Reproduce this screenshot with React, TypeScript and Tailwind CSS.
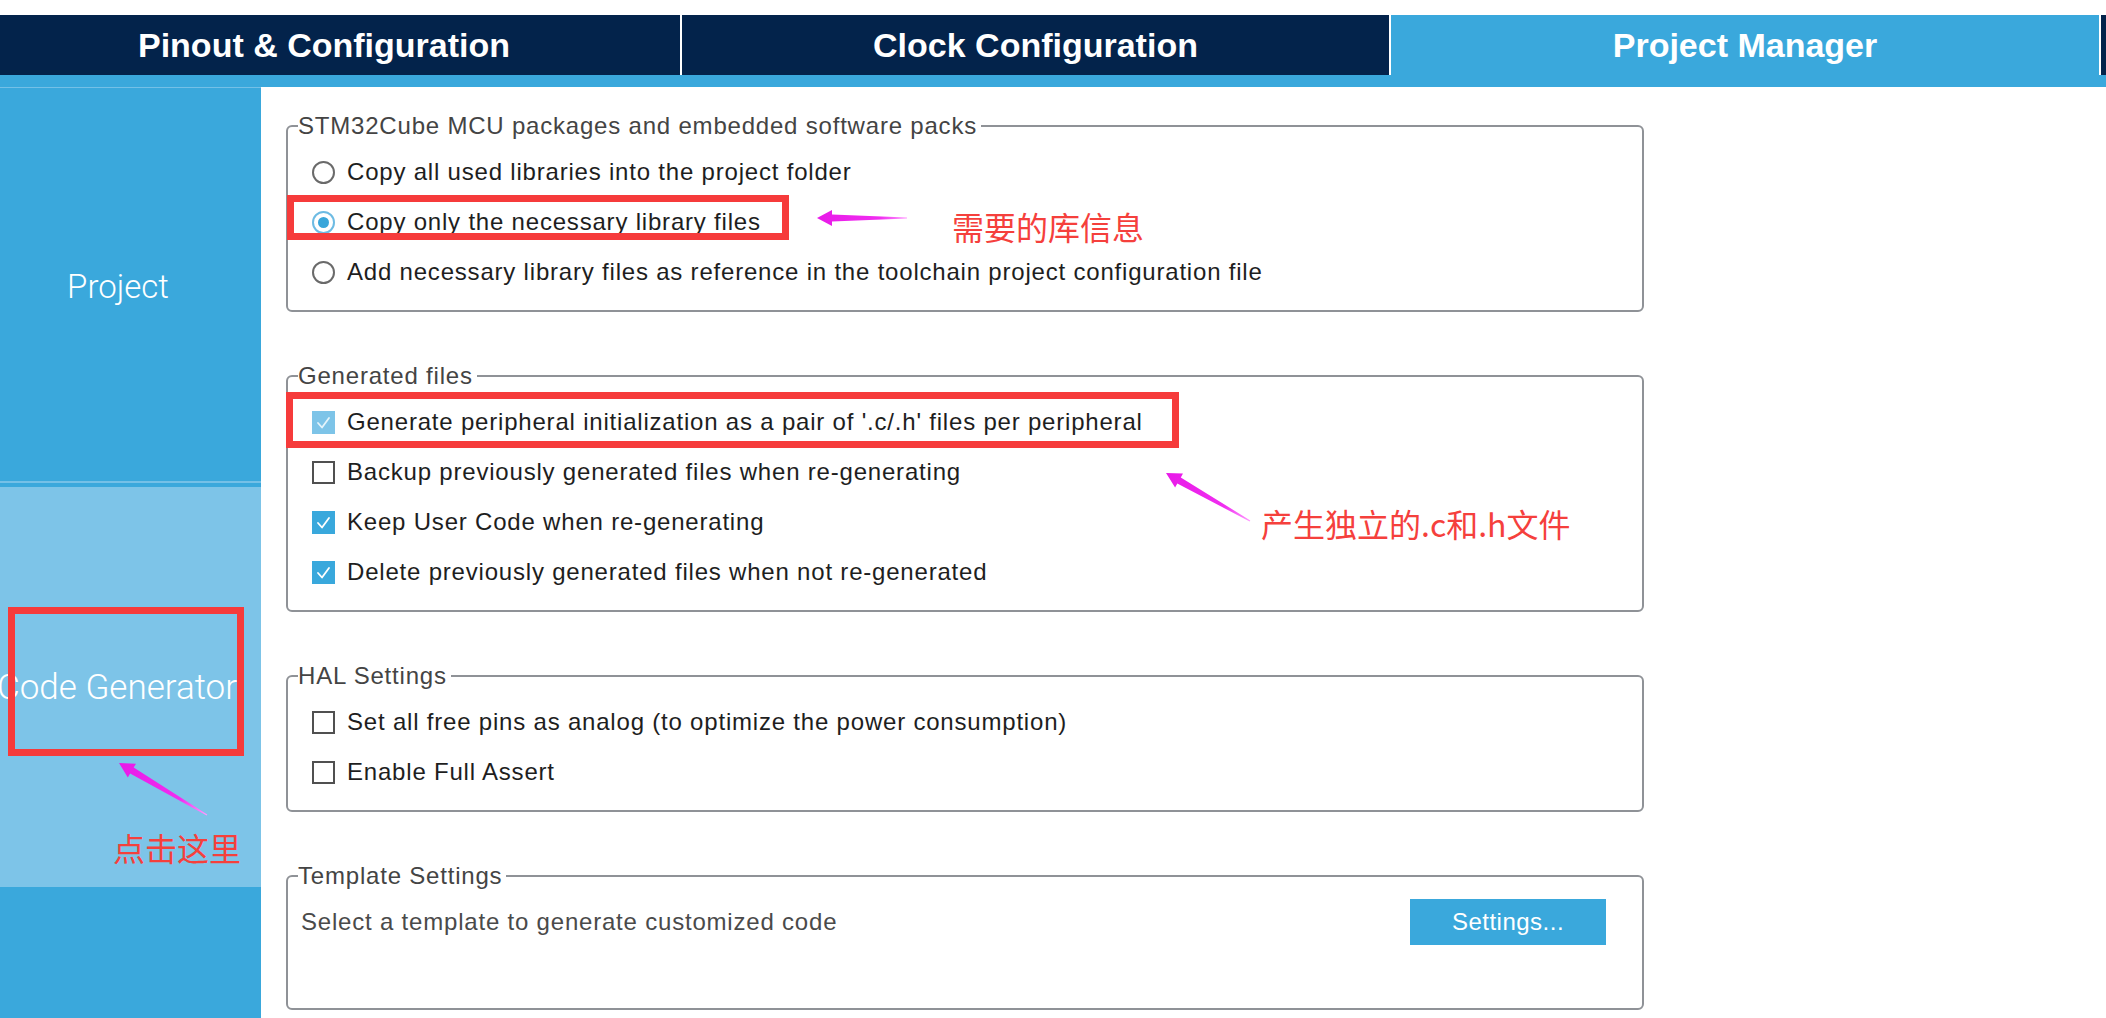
import React from "react";

type Pt = [number, number];

const UI_FONT = "font-['Liberation_Sans',Arial,sans-serif]";
const CJK_FONT = "font-['Noto_Sans_CJK_SC','Noto_Sans',sans-serif]";

function arrowPoints(tip: Pt, tail: Pt) {
  const dx = tail[0] - tip[0];
  const dy = tail[1] - tip[1];
  const len = Math.hypot(dx, dy);
  const ux = dx / len;
  const uy = dy / len;
  const nx = -uy;
  const ny = ux;
  const p = (a: number, b: number) =>
    `${(tip[0] + ux * a + nx * b).toFixed(1)},${(tip[1] + uy * a + ny * b).toFixed(1)}`;
  return [p(0, 0), p(15, 8), p(15, 3.5), p(len, 0.6), p(len, -0.6), p(15, -3.5), p(15, -8)].join(" ");
}

const arrows: { tip: Pt; tail: Pt }[] = [
  { tip: [817, 218], tail: [907, 218] },
  { tip: [1166, 473], tail: [1250, 521] },
  { tip: [119, 763], tail: [207, 815] },
];

function Radio({ checked }: { checked?: boolean }) {
  if (checked)
    return (
      <span className="flex h-[23px] w-[23px] shrink-0 items-center justify-center rounded-full border-2 border-[#6dbbe3] bg-white">
        <span className="h-[11px] w-[11px] rounded-full bg-[#39a6da]" />
      </span>
    );
  return <span className="h-[23px] w-[23px] shrink-0 rounded-full border-2 border-[#6a6a6a] bg-white" />;
}

function Check({ state }: { state: "on" | "off" | "dim" }) {
  if (state === "off")
    return <span className="h-[23px] w-[23px] shrink-0 border-2 border-[#505050] bg-white" />;
  return (
    <span
      className={`flex h-[23px] w-[23px] shrink-0 items-center justify-center ${
        state === "on" ? "bg-[#39a8dc]" : "bg-[#7dc4e8]"
      }`}
    >
      <svg width="23" height="23" viewBox="0 0 23 23">
        <polyline
          points="6,12 10,16.5 17,7"
          fill="none"
          stroke={state === "on" ? "#ffffff" : "#e4f4fb"}
          strokeWidth="1.8"
          strokeLinecap="round"
          strokeLinejoin="round"
        />
      </svg>
    </span>
  );
}

function Row({ control, label }: { control: React.ReactNode; label: string }) {
  return (
    <div className="flex h-[50px] items-center gap-[12px] pl-[14px]">
      {control}
      <span className="whitespace-nowrap text-[24px] tracking-[0.8px] text-[#1e1e1e]">{label}</span>
    </div>
  );
}

function Group({
  title,
  children,
  bottom = "pb-[13px]",
}: {
  title: string;
  children: React.ReactNode;
  bottom?: string;
}) {
  return (
    <fieldset className={`w-[1358px] rounded-[6px] border-2 border-[#8f9297] pl-[10px] pr-[36px] pt-[7px] ${bottom}`}>
      <legend className="pr-[4px] text-[24px] leading-[28px] tracking-[0.8px] text-[#444444]">{title}</legend>
      {children}
    </fieldset>
  );
}

export default function App() {
  return (
    <div className={`relative flex h-[1018px] w-[2106px] flex-col overflow-hidden bg-white ${UI_FONT}`}>
      <div className="h-[15px] shrink-0" />

      {/* top tabs */}
      <div className="flex h-[60px] shrink-0 gap-[2px] bg-white">
        <div className="flex w-[680px] items-center justify-center bg-[#03234b] pr-[32px] text-[34px] font-bold text-white">
          Pinout &amp; Configuration
        </div>
        <div className="flex w-[707px] items-center justify-center bg-[#03234b] text-[34px] font-bold text-white">
          Clock Configuration
        </div>
        <div className="flex w-[708px] items-center justify-center bg-[#3aa8dc] text-[34px] font-bold text-white">
          Project Manager
        </div>
        <div className="w-[5px] bg-[#03234b]" />
      </div>
      <div className="h-[12px] shrink-0 bg-[#3aa8dc]" />

      <div className="flex flex-1">
        {/* side menu */}
        <div className="flex w-[261px] shrink-0 flex-col bg-[#3aa8dc] font-['Roboto',sans-serif] font-light">
          <div className="h-[1px] bg-[#74c0e7]" />
          <div className="flex h-[393px] items-center justify-center pr-[25px] pt-[5px] text-[33px] text-white">
            Project
          </div>
          <div className="h-[2px] bg-[#74c0e7]" />
          <div className="h-[4px]" />
          <div className="flex h-[400px] items-center justify-center overflow-hidden bg-[#7dc4e8] pr-[27px] pt-[3px] text-[35px] text-white">
            <span className="whitespace-nowrap">Code Generator</span>
          </div>
        </div>

        {/* settings */}
        <div className="flex flex-col gap-[50px] pl-[25px] pt-[25px]">
          <Group title="STM32Cube MCU packages and embedded software packs">
            <Row control={<Radio />} label="Copy all used libraries into the project folder" />
            <Row control={<Radio checked />} label="Copy only the necessary library files" />
            <Row
              control={<Radio />}
              label="Add necessary library files as reference in the toolchain project configuration file"
            />
          </Group>

          <Group title="Generated files">
            <Row
              control={<Check state="dim" />}
              label="Generate peripheral initialization as a pair of '.c/.h' files per peripheral"
            />
            <Row control={<Check state="off" />} label="Backup previously generated files when re-generating" />
            <Row control={<Check state="on" />} label="Keep User Code when re-generating" />
            <Row control={<Check state="on" />} label="Delete previously generated files when not re-generated" />
          </Group>

          <Group title="HAL Settings">
            <Row control={<Check state="off" />} label="Set all free pins as analog (to optimize the power consumption)" />
            <Row control={<Check state="off" />} label="Enable Full Assert" />
          </Group>

          <Group title="Template Settings" bottom="pb-[61px]">
            <div className="flex h-[50px] items-center justify-between pl-[3px]">
              <span className="text-[24px] tracking-[0.8px] text-[#4a4a4a]">
                Select a template to generate customized code
              </span>
              <button className="h-[46px] w-[196px] bg-[#3aa8dc] text-[24px] tracking-[0.5px] text-white">
                Settings...
              </button>
            </div>
          </Group>
        </div>
      </div>

      {/* annotations drawn over the screenshot */}
      <div className="pointer-events-none absolute inset-0">
        <div className="absolute left-[287px] top-[195px] h-[45px] w-[502px] border-[7px] border-[#f63b3b]" />
        <div className="absolute left-[286px] top-[392px] h-[56px] w-[893px] border-[7px] border-[#f63b3b]" />
        <div className="absolute left-[8px] top-[607px] h-[149px] w-[236px] border-[7px] border-[#f63b3b]" />

        <div className={`absolute left-[952px] top-[206px] flex h-[40px] items-center text-[32px] leading-none text-[#f5403c] ${CJK_FONT}`}>
          需要的库信息
        </div>
        <div className={`absolute left-[1261px] top-[503px] flex h-[40px] items-center whitespace-nowrap text-[32px] leading-none text-[#f5403c] ${CJK_FONT}`}>
          产生独立的.c和.h文件
        </div>
        <div className={`absolute left-[113px] top-[827px] flex h-[40px] items-center text-[32px] leading-none text-[#f5403c] ${CJK_FONT}`}>
          点击这里
        </div>

        <svg className="absolute left-0 top-0" width="2106" height="1018">
          {arrows.map((a, i) => (
            <g key={i}>
              <defs>
                <linearGradient
                  id={`ag${i}`}
                  gradientUnits="userSpaceOnUse"
                  x1={a.tip[0]}
                  y1={a.tip[1]}
                  x2={a.tail[0]}
                  y2={a.tail[1]}
                >
                  <stop offset="0" stopColor="#e81ae8" />
                  <stop offset="0.7" stopColor="#f02ef0" />
                  <stop offset="1" stopColor="#ff9cff" />
                </linearGradient>
              </defs>
              <polygon points={arrowPoints(a.tip, a.tail)} fill={`url(#ag${i})`} />
            </g>
          ))}
        </svg>
      </div>
    </div>
  );
}
